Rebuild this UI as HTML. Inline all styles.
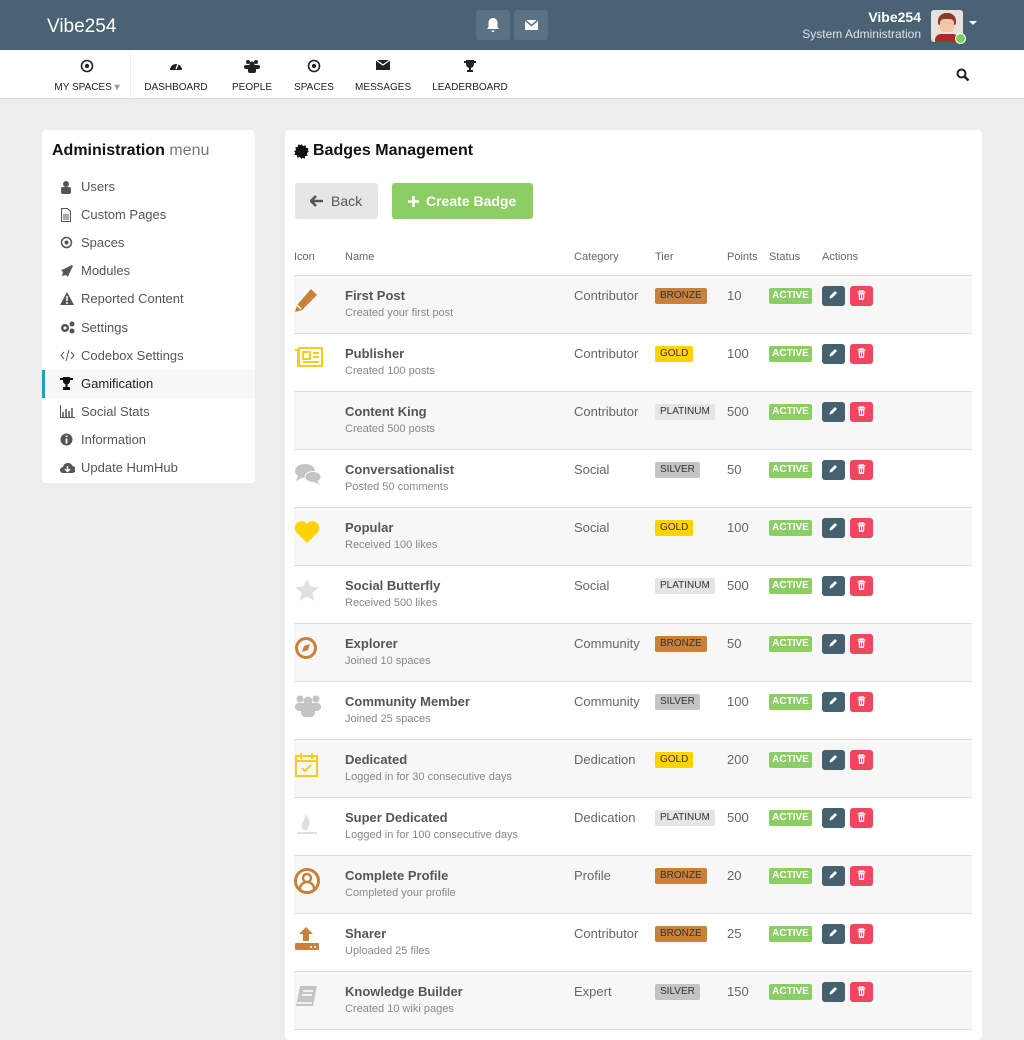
<!DOCTYPE html>
<html><head><meta charset="utf-8"><style>
*{box-sizing:border-box;margin:0;padding:0}
body{width:1024px;height:1032px;overflow:hidden;background:#ededed;font-family:"Liberation Sans",sans-serif;color:#555;position:relative}
.hdr{position:absolute;left:0;top:0;width:1024px;height:50px;background:#4a6374}
.nav{position:absolute;left:0;top:50px;width:1024px;height:49px;background:#fff;border-bottom:1px solid #ddd}
.ni{position:absolute;top:0;height:49px;text-align:center;font-size:10px;color:#222}
.ni .ic{position:absolute;top:9px;left:50%;transform:translateX(-50%)}
.ni span{position:absolute;top:32px;left:0;right:0;white-space:nowrap}
.panel{position:absolute;background:#fff;border-radius:4px}
.side a{position:absolute;left:0;width:213px;height:28px;font-size:13px;color:#555;line-height:28px;padding-left:39px}
.side svg{position:absolute;left:18px;top:7px}
.row{position:absolute;left:294px;width:678px;height:58px;border-top:1px solid #ddd}
.row.g{background:#f7f7f7}
.row .n{position:absolute;left:51px;top:12px;font-size:13px;font-weight:bold;color:#555}
.row .d{position:absolute;left:51px;top:31px;font-size:11px;color:#888}
.row .c{position:absolute;left:280px;top:12px;font-size:13px;color:#666}
.row .t{position:absolute;left:361px;top:12px;height:16px;padding:0 5px;font-size:10px;line-height:16px;border-radius:2px;color:#333}
.row .p{position:absolute;left:433px;top:12px;font-size:13px;color:#666}
.row .s{position:absolute;left:475px;top:12px;height:16px;width:43px;background:#8ccd64;color:#fff;font-size:10px;font-weight:bold;line-height:16px;text-align:center;border-radius:2px}
.row .e,.row .x{position:absolute;top:10px;width:23px;height:20px;border-radius:3px}
.row .e{left:528px;background:#45606f}.row .x{left:556px;background:#f0475f}
.row .ic{position:absolute;left:0;top:12px}
.BRONZE{background:#c8803a}.GOLD{background:#ffd200}.PLATINUM{background:#e5e5e5}.SILVER{background:#c4c4c4}
.th{position:absolute;top:251px;font-size:11px;color:#666}
</style></head><body>
<div class="hdr">
 <div style="position:absolute;left:47px;top:16px;font-size:19px;color:#fff">Vibe254</div>
 <div style="position:absolute;left:476px;top:10px;width:34px;height:30px;background:#5a7282;border-radius:3px"><svg width="34" height="30"><path d="M17 8c-3 0-4.5 2.5-4.5 5v4l-1.5 2h12l-1.5-2v-4c0-2.5-1.5-5-4.5-5zM15.5 20.5a1.5 1.5 0 003 0z" fill="#fff"/></svg></div>
 <div style="position:absolute;left:514px;top:10px;width:34px;height:30px;background:#5a7282;border-radius:3px"><svg width="34" height="30"><rect x="11" y="10" width="13" height="10" fill="#fff"/><path d="M11 10l6.5 5.5L24 10" stroke="#5a7282" stroke-width="1.5" fill="none"/></svg></div>
 <div style="position:absolute;right:103px;top:9px;font-size:14px;font-weight:bold;color:#fff">Vibe254</div>
 <div style="position:absolute;right:103px;top:27px;font-size:12px;color:#dde4e8">System Administration</div>
 <div style="position:absolute;left:931px;top:10px;width:32px;height:32px;background:#e8e0dc;border-radius:3px;overflow:hidden"><div style="position:absolute;left:7px;top:3px;width:18px;height:12px;background:#8b3a2a;border-radius:8px 8px 2px 2px"></div><div style="position:absolute;left:9px;top:9px;width:14px;height:13px;background:#f2c6a4;border-radius:4px"></div><div style="position:absolute;left:4px;top:24px;width:24px;height:10px;background:#b02a2a;border-radius:6px 6px 0 0"></div></div>
 <div style="position:absolute;left:955px;top:33px;width:11px;height:11px;background:#7ed05b;border-radius:50%;border:1px solid #fff"></div>
 <div style="position:absolute;left:969px;top:21px;border:4px solid transparent;border-top:4px solid #fff"></div>
</div>
<div class="nav">
 <div class="ni" style="left:44px;width:87px;border-right:1px solid #eee"><svg class="ic" width="14" height="14"><circle cx="7" cy="7" r="5.5" stroke="#222" stroke-width="1.6" fill="none"/><circle cx="7" cy="7" r="2.2" fill="#222"/></svg><span>MY SPACES <b style="color:#999">▾</b></span></div>
 <div class="ni" style="left:141px;width:70px"><svg class="ic" width="14" height="14"><path d="M1 11A6 6 0 1113 11z" fill="#222"/><path d="M7 10l2-5" stroke="#fff" stroke-width="1.3"/></svg><span>DASHBOARD</span></div>
 <div class="ni" style="left:230px;width:44px"><svg class="ic" width="16" height="14"><circle cx="4" cy="3" r="2" fill="#222"/><circle cx="12" cy="3" r="2" fill="#222"/><circle cx="8" cy="5" r="2.5" fill="#222"/><rect x="0" y="6" width="16" height="4" rx="2" fill="#222"/><rect x="4" y="8" width="8" height="6" rx="2" fill="#222"/></svg><span>PEOPLE</span></div>
 <div class="ni" style="left:293px;width:42px"><svg class="ic" width="14" height="14"><circle cx="7" cy="7" r="5.5" stroke="#222" stroke-width="1.6" fill="none"/><circle cx="7" cy="7" r="2.2" fill="#222"/></svg><span>SPACES</span></div>
 <div class="ni" style="left:355px;width:56px"><svg class="ic" width="14" height="12"><rect x="0" y="1" width="14" height="10" fill="#222"/><path d="M0 1l7 5 7-5" stroke="#fff" stroke-width="1.3" fill="none"/></svg><span>MESSAGES</span></div>
 <div class="ni" style="left:432px;width:76px"><svg class="ic" width="14" height="14"><path d="M3 1h8v4a4 4 0 01-8 0z M1 2h2v2H1zM11 2h2v2h-2z" fill="#222"/><rect x="6" y="8" width="2" height="3" fill="#222"/><rect x="4" y="11" width="6" height="2" fill="#222"/></svg><span>LEADERBOARD</span></div>
 <svg style="position:absolute;left:956px;top:18px" width="14" height="14"><circle cx="5.5" cy="5.5" r="4" stroke="#222" stroke-width="2" fill="none"/><path d="M8.5 8.5l4 4" stroke="#222" stroke-width="2.4"/></svg>
</div>

<div class="panel side" style="left:42px;top:130px;width:213px;height:353px">
 <div style="position:absolute;left:10px;top:12px;font-size:16px;color:#111;font-weight:bold">Administration <span style="font-weight:normal;color:#777">menu</span></div>
 <a style="top:43px"><svg width="12" height="14"><circle cx="6" cy="4" r="3" fill="#555"/><rect x="1" y="7" width="10" height="7" rx="2" fill="#555"/></svg>Users</a>
 <a style="top:71px"><svg width="12" height="14"><path d="M1.5 .5h6l3 3v10h-9z" stroke="#555" fill="none"/><path d="M3 7h6M3 9h6M3 11h6" stroke="#555"/></svg>Custom Pages</a>
 <a style="top:99px"><svg width="13" height="13"><circle cx="6.5" cy="6.5" r="5" stroke="#555" stroke-width="1.5" fill="none"/><circle cx="6.5" cy="6.5" r="2" fill="#555"/></svg>Spaces</a>
 <a style="top:127px"><svg width="13" height="13"><path d="M12 1L4 5 1 6l2 2-1 4 4-1 2 2 1-3 4-8z" fill="#555"/></svg>Modules</a>
 <a style="top:155px"><svg width="14" height="13"><path d="M7 0l7 13H0z" fill="#555"/><path d="M7 4v5M7 10v2" stroke="#fff" stroke-width="1.5"/></svg>Reported Content</a>
 <a style="top:184px"><svg width="15" height="13"><circle cx="5" cy="7" r="4" fill="#555"/><circle cx="5" cy="7" r="1.5" fill="#fff"/><circle cx="12" cy="3" r="2.5" fill="#555"/><circle cx="12" cy="10" r="2.5" fill="#555"/></svg>Settings</a>
 <a style="top:212px"><svg width="15" height="13"><path d="M4 3L1 6.5 4 10M11 3l3 3.5-3 3.5M9 1L6 12" stroke="#555" fill="none"/></svg>Codebox Settings</a>
 <a style="top:240px;background:#f7f7f7;border-left:3px solid #21a1b3;padding-left:36px"><svg width="13" height="13" style="left:15px"><path d="M3 0h7v4a3.5 3.5 0 01-7 0z M0 1h3v2H0zM10 1h3v2h-3z" fill="#111"/><rect x="5.5" y="7" width="2" height="3" fill="#111"/><rect x="3" y="10" width="7" height="3" fill="#111"/></svg><span style="color:#222">Gamification</span></a>
 <a style="top:268px"><svg width="15" height="13"><path d="M.5 0v12.5H15" stroke="#555" fill="none"/><path d="M3 7v5M6 4v8M9 6v6M12 3v9" stroke="#555" stroke-width="1.5"/></svg>Social Stats</a>
 <a style="top:296px"><svg width="13" height="13"><circle cx="6.5" cy="6.5" r="6" fill="#555"/><path d="M6.5 5.5v5M6.5 2.5v1.5" stroke="#fff" stroke-width="1.8"/></svg>Information</a>
 <a style="top:324px"><svg width="15" height="13"><path d="M3 12a3 3 0 010-6 5 5 0 019.5-1A3.5 3.5 0 0112 12z" fill="#555"/><path d="M7.5 5v5M5 8l2.5 2.5L10 8" stroke="#fff" stroke-width="1.4" fill="none"/></svg>Update HumHub</a>
</div>

<div class="panel" style="left:285px;top:130px;width:697px;height:910px"></div>
<svg style="position:absolute;left:294px;top:144px" width="15" height="15"><path d="M7.5 0l1.6 2.1 2.5-.9.4 2.6 2.6.4-.9 2.5L15 7.5l-2.1 1.6.9 2.5-2.6.4-.4 2.6-2.5-.9L7.5 15l-1.6-2.1-2.5.9-.4-2.6-2.6-.4.9-2.5L0 7.5l2.1-1.6-.9-2.5 2.6-.4.4-2.6 2.5.9z" fill="#111"/></svg>
<div style="position:absolute;left:313px;top:142px;font-size:16px;font-weight:bold;color:#111">Badges Management</div>
<div style="position:absolute;left:295px;top:183px;width:83px;height:36px;background:#e6e6e6;border-radius:3px;font-size:14px;color:#555;line-height:36px;padding-left:36px">Back<svg style="position:absolute;left:15px;top:12px" width="13" height="12"><path d="M6 1L1 6l5 5M1 6h12" stroke="#555" stroke-width="2.6" fill="none"/></svg></div>
<div style="position:absolute;left:392px;top:183px;width:141px;height:36px;background:#8ccd64;border-radius:3px;font-size:14px;font-weight:bold;color:#fff;line-height:36px;padding-left:34px">Create Badge<svg style="position:absolute;left:16px;top:13px" width="11" height="11"><path d="M5.5 0v11M0 5.5h11" stroke="#fff" stroke-width="2.6"/></svg></div>

<div class="th" style="left:294px">Icon</div><div class="th" style="left:345px">Name</div><div class="th" style="left:574px">Category</div><div class="th" style="left:655px">Tier</div><div class="th" style="left:727px">Points</div><div class="th" style="left:769px">Status</div><div class="th" style="left:822px">Actions</div>

<div id="rows"></div>
<div style="position:absolute;left:294px;top:1029px;width:678px;height:1px;background:#ddd"></div>
<script>
var ic={
pen:'<svg width="24" height="24"><path d="M17 1l6 6L8 22l-7 2 2-7z" fill="#c8803a"/><path d="M3 17l4 4" stroke="#fff" stroke-width="1.5"/></svg>',
news:'<svg width="30" height="24"><path d="M1 4h3v16h24V4" stroke="#f5cd1e" stroke-width="2" fill="none"/><rect x="5" y="2" width="23" height="18" stroke="#f5cd1e" stroke-width="2" fill="none"/><rect x="9" y="6" width="7" height="7" stroke="#f5cd1e" stroke-width="2" fill="none"/><path d="M19 7h6M19 11h6M9 16h16" stroke="#f5cd1e" stroke-width="2"/></svg>',
none:'',
chat:'<svg width="28" height="24"><ellipse cx="11" cy="9" rx="10" ry="7" fill="#c4c4c4"/><path d="M4 14l-2 5 6-3z" fill="#c4c4c4"/><ellipse cx="19" cy="15" rx="8" ry="5.5" fill="#c4c4c4" stroke="#fff"/><path d="M23 19l3 4-6-3z" fill="#c4c4c4"/></svg>',
heart:'<svg width="26" height="24"><path d="M13 23L2 12A6 6 0 0113 4a6 6 0 0111 8z" fill="#ffd200"/></svg>',
star:'<svg width="26" height="24"><path d="M13 1l3.5 7.5 8 .8-6 5.5 1.8 8L13 18.7 5.7 22.8l1.8-8-6-5.5 8-.8z" fill="#e0e0e0"/></svg>',
comp:'<svg width="26" height="24"><circle cx="12" cy="12" r="9.5" stroke="#c8803a" stroke-width="3" fill="none"/><path d="M16 8l-2 6-6 2 2-6z" fill="#c8803a"/></svg>',
group:'<svg width="28" height="24"><circle cx="6" cy="5" r="3.5" fill="#c4c4c4"/><circle cx="22" cy="5" r="3.5" fill="#c4c4c4"/><circle cx="14" cy="7" r="4.5" fill="#c4c4c4"/><rect x="1" y="9" width="26" height="8" rx="4" fill="#c4c4c4"/><rect x="7" y="12" width="14" height="11" rx="4" fill="#c4c4c4"/></svg>',
cal:'<svg width="26" height="26"><rect x="2" y="4" width="21" height="20" stroke="#f5cd1e" stroke-width="2" fill="none"/><path d="M2 9h21M7 1v6M18 1v6" stroke="#f5cd1e" stroke-width="2"/><path d="M8 16l3 3 6-6" stroke="#f5cd1e" stroke-width="2" fill="none"/></svg>',
fire:'<svg width="26" height="26"><path d="M10 20c-4-3-2-7 0-10s1-6 1-6c5 4 6 10 2 16z" fill="#e0e0e0"/><path d="M3 23h20" stroke="#e0e0e0" stroke-width="2"/></svg>',
user:'<svg width="26" height="26"><circle cx="13" cy="13" r="11.5" stroke="#c8803a" stroke-width="3" fill="#fff"/><circle cx="13" cy="10" r="4" stroke="#c8803a" stroke-width="2.5" fill="none"/><path d="M6 21a7 7 0 0114 0" stroke="#c8803a" stroke-width="2.5" fill="none"/></svg>',
up:'<svg width="26" height="26"><path d="M12 1l7 7h-4v7H9V8H5z" fill="#c8803a"/><rect x="1" y="17" width="24" height="7" rx="1" fill="#c8803a"/><circle cx="17" cy="21" r="1" fill="#fff"/><circle cx="21" cy="21" r="1" fill="#fff"/></svg>',
book:'<svg width="26" height="26"><path d="M6 2h17l-4 20H2z" fill="#c4c4c4"/><path d="M9 7h10M8 11h10M3 19h15" stroke="#fff" stroke-width="1.5"/></svg>'
};
var d=[["pen","First Post","Created your first post","Contributor","BRONZE",10],
["news","Publisher","Created 100 posts","Contributor","GOLD",100],
["none","Content King","Created 500 posts","Contributor","PLATINUM",500],
["chat","Conversationalist","Posted 50 comments","Social","SILVER",50],
["heart","Popular","Received 100 likes","Social","GOLD",100],
["star","Social Butterfly","Received 500 likes","Social","PLATINUM",500],
["comp","Explorer","Joined 10 spaces","Community","BRONZE",50],
["group","Community Member","Joined 25 spaces","Community","SILVER",100],
["cal","Dedicated","Logged in for 30 consecutive days","Dedication","GOLD",200],
["fire","Super Dedicated","Logged in for 100 consecutive days","Dedication","PLATINUM",500],
["user","Complete Profile","Completed your profile","Profile","BRONZE",20],
["up","Sharer","Uploaded 25 files","Contributor","BRONZE",25],
["book","Knowledge Builder","Created 10 wiki pages","Expert","SILVER",150]];
var h='';
var pen='<svg width="23" height="20"><path d="M13 5l2 2-5 5-2.5.5.5-2.5z" fill="#fff"/></svg>';
var tr='<svg width="23" height="20"><path d="M7.5 6h8M9 5h5" stroke="#fff" stroke-width="1.3"/><path d="M8.5 7h6l-.5 7h-5z" fill="#fff"/><path d="M10.5 8.5v4M12.5 8.5v4" stroke="#f0475f"/></svg>';
d.forEach(function(r,i){h+='<div class="row'+(i%2==0?' g':'')+'" style="top:'+(275+i*58)+'px"><div class="ic">'+ic[r[0]]+'</div><div class="n">'+r[1]+'</div><div class="d">'+r[2]+'</div><div class="c">'+r[3]+'</div><div class="t '+r[4]+'">'+r[4]+'</div><div class="p">'+r[5]+'</div><div class="s">ACTIVE</div><div class="e">'+pen+'</div><div class="x">'+tr+'</div></div>';});
document.getElementById('rows').innerHTML=h;
</script>
</body></html>
